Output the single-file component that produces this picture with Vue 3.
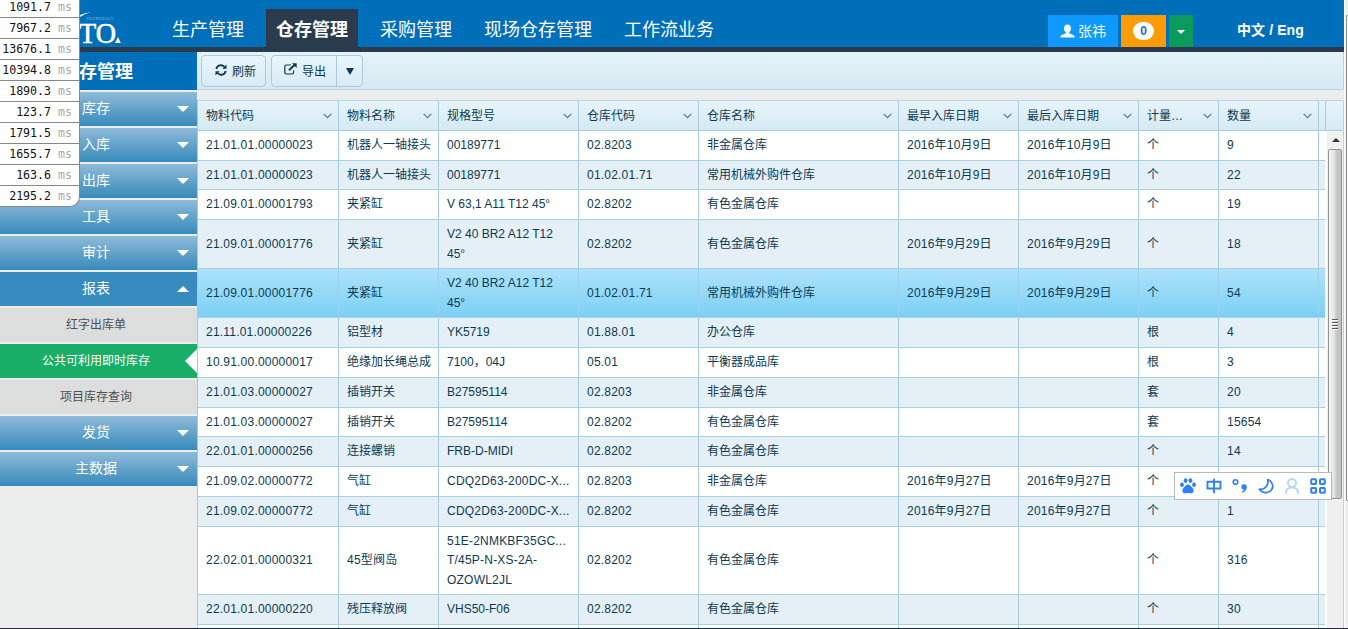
<script setup>
const timings = ['1091.7', '7967.2', '13676.1', '10394.8', '1890.3', '123.7', '1791.5', '1655.7', '163.6', '2195.2']
const tabs = ['生产管理', '仓存管理', '采购管理', '现场仓存管理', '工作流业务']
const menu = [
  { t: '库存' }, { t: '入库' }, { t: '出库' }, { t: '工具' }, { t: '审计' },
  { t: '报表', k: 'open' },
  { t: '红字出库单', k: 'sub' },
  { t: '公共可利用即时库存', k: 'sub current' },
  { t: '项目库存查询', k: 'sub' },
  { t: '发货' }, { t: '主数据' },
]
const columns = ['物料代码', '物料名称', '规格型号', '仓库代码', '仓库名称', '最早入库日期', '最后入库日期', '计量…', '数量']
const oct = '2016年10月9日'
const s29 = '2016年9月29日'
const s27 = '2016年9月27日'
const rows = [
  { h: 30, c: ['21.01.01.00000023', '机器人一轴接头', '00189771', '02.8203', '非金属仓库', oct, oct, '个', '9'] },
  { h: 29, c: ['21.01.01.00000023', '机器人一轴接头', '00189771', '01.02.01.71', '常用机械外购件仓库', oct, oct, '个', '22'] },
  { h: 30, c: ['21.09.01.00001793', '夹紧缸', 'V 63,1 A11 T12 45°', '02.8202', '有色金属仓库', '', '', '个', '19'] },
  { h: 49, c: ['21.09.01.00001776', '夹紧缸', 'V2 40 BR2 A12 T12\n45°', '02.8202', '有色金属仓库', s29, s29, '个', '18'] },
  { h: 49, sel: true, c: ['21.09.01.00001776', '夹紧缸', 'V2 40 BR2 A12 T12\n45°', '01.02.01.71', '常用机械外购件仓库', s29, s29, '个', '54'] },
  { h: 30, c: ['21.11.01.00000226', '铝型材', 'YK5719', '01.88.01', '办公仓库', '', '', '根', '4'] },
  { h: 30, c: ['10.91.00.00000017', '绝缘加长绳总成', '7100，04J', '05.01', '平衡器成品库', '', '', '根', '3'] },
  { h: 30, c: ['21.01.03.00000027', '插销开关', 'B27595114', '02.8203', '非金属仓库', '', '', '套', '20'] },
  { h: 29, c: ['21.01.03.00000027', '插销开关', 'B27595114', '02.8202', '有色金属仓库', '', '', '套', '15654'] },
  { h: 30, c: ['22.01.01.00000256', '连接螺销', 'FRB-D-MIDI', '02.8202', '有色金属仓库', '', '', '个', '14'] },
  { h: 30, c: ['21.09.02.00000772', '气缸', 'CDQ2D63-200DC-X...', '02.8203', '非金属仓库', s27, s27, '个', ''] },
  { h: 30, c: ['21.09.02.00000772', '气缸', 'CDQ2D63-200DC-X...', '02.8202', '有色金属仓库', s27, s27, '个', '1'] },
  { h: 68, c: ['22.02.01.00000321', '45型阀岛', '51E-2NMKBF35GC...\nT/45P-N-XS-2A-\nOZOWL2JL', '02.8202', '有色金属仓库', '', '', '个', '316'] },
  { h: 30, c: ['22.01.01.00000220', '残压释放阀', 'VHS50-F06', '02.8202', '有色金属仓库', '', '', '个', '30'] },
  { h: 30, c: ['', '', '', '', '', '', '', '', ''] },
]
const isCode = (s, i) => /[0-9]/.test(s) && (i !== 2 || s.includes('...'))
</script>

<template>
  <div class="page">
    <div class="window">
      <header class="top">
        <svg class="logo" width="50" height="36" viewBox="0 0 50 36">
          <path d="M8 4.500Q14 1.500 20 1.200Q14 2.500 9 6z" fill="#fff" />
          <text x="15" y="9" class="logo-small" textLength="28">TECHNOLOGY</text>
          <text x="8" y="32" class="logo-text" textLength="37" lengthAdjust="spacingAndGlyphs">TO</text>
          <path d="M47 26L49.800 32H44z" fill="#fff" />
        </svg>
        <nav class="tabs">
          <a v-for="(t, i) in tabs" :key="t" :class="['tab', { active: i === 1 }]">{{ t }}</a>
        </nav>
        <div class="user">
          <span class="name">
            <svg width="16" height="16" viewBox="0 0 16 16"><path fill="#fff" d="M8 1C5.700 1 4.300 2.600 4.300 5c0 2 .8 3.300 1.900 4.400v1L2 12.200C1 12.700 .5 13.200 .5 15h15c0-1.800-.5-2.300-1.500-2.800l-4.200-1.800v-1c1.100-1.100 1.900-2.400 1.900-4.400C11.700 2.600 10.300 1 8 1z" /></svg>
            张祎
          </span>
          <span class="msgs"><b>0</b></span>
          <span class="more"><i></i></span>
        </div>
        <span class="lang">中文 / Eng</span>
      </header>

      <div class="body">
        <aside class="side">
          <h1>存管理</h1>
          <div v-for="m in menu" :key="m.t" :class="['item', m.k]">
            {{ m.t }}
            <i class="arrow"></i>
          </div>
        </aside>

        <main class="main">
          <div class="toolbar">
            <button class="btn refresh">
              <svg width="12" height="12" viewBox="0 0 12 12" fill="none" stroke="#0c3a54" stroke-width="1.800"><path d="M1.300 5A4.600 4.600 0 0 1 9.400 3M10.700 7A4.600 4.600 0 0 1 2.600 9" /><path d="M11.500 .6v4.200H7.300zM.5 11.400V7.200h4.200z" fill="#0c3a54" stroke="none" /></svg>
              <span>刷新</span>
            </button>
            <div class="group">
              <button class="btn export">
                <svg width="13" height="12" viewBox="0 0 13 12" fill="none" stroke="#0c3a54"><path d="M7 2H2.500Q.8 2 .8 3.700v5.600Q.8 11 2.500 11h5.400q1.700 0 1.700-1.700V7.500" stroke-width="1.200" /><path d="M5 7.300L10.500 2" stroke-width="1.900" /><path d="M8 .2h4.700v4.700z" fill="#0c3a54" stroke="none" /></svg>
                <span>导出</span>
              </button>
              <button class="btn drop"><i></i></button>
            </div>
          </div>

          <section class="grid">
            <div class="row head">
              <div v-for="c in columns" :key="c" class="cell">
                <span>{{ c }}</span>
                <svg width="9" height="6" viewBox="0 0 9 6"><path d="M.7 .8L4.500 4.600L8.300 .8" fill="none" stroke="#547388" stroke-width="1.100" /></svg>
              </div>
              <div class="cell filler"></div>
              <div class="cell last"></div>
            </div>
            <div class="scroll">
              <div class="rows">
                <div v-for="(r, n) in rows" :key="n" :class="['row', { alt: n % 2, sel: r.sel }]" :style="{ height: r.h + 'px' }">
                  <div v-for="(v, i) in r.c" :key="i" :class="['cell', { code: isCode(v, i) }]">{{ v }}</div>
                </div>
              </div>
              <div class="bar">
                <i class="up"></i>
                <div class="thumb"><i></i><i></i><i></i><i></i></div>
              </div>
            </div>
          </section>
        </main>
      </div>
    </div>

    <div class="outer"><div></div></div>

    <div class="timings">
      <div v-for="t in timings" :key="t">{{ t }} <em>ms</em></div>
    </div>

    <div class="ime">
      <svg width="16" height="16" viewBox="0 0 16 16" fill="#2f80f6"><ellipse cx="2" cy="6.800" rx="1.900" ry="2.200" /><ellipse cx="5.600" cy="2.600" rx="1.900" ry="2.400" /><ellipse cx="10.400" cy="2.600" rx="1.900" ry="2.400" /><ellipse cx="14" cy="6.800" rx="1.900" ry="2.200" /><path d="M8 6.500c2 0 2.600 1.500 4.200 3 2 1.900 2 6-1.200 6-1.200 0-1.800-.4-3-.4s-1.800.4-3 .4c-3.200 0-3.200-4.100-1.200-6C5.400 8 6 6.500 8 6.500z" /></svg>
      <svg width="16" height="16" viewBox="0 0 16 16" fill="none" stroke="#2f80f6" stroke-width="1.900"><path d="M1.500 3.800h13v6.700h-13zM8 .8v14.400" /></svg>
      <svg width="16" height="16" viewBox="0 0 16 16"><circle cx="3.500" cy="4" r="2.300" fill="none" stroke="#2f80f6" stroke-width="1.600" /><path d="M12 6.200a2.700 2.700 0 0 1 2.800 2.800c0 2.700-1.800 4.900-4.500 5.800l-.5-1.200c1.400-.7 2-1.300 2.100-2.200A2.600 2.600 0 1 1 12 6.200z" fill="#2f80f6" /></svg>
      <svg width="16" height="16" viewBox="0 0 16 16" fill="none" stroke="#2f80f6" stroke-width="1.700" stroke-linejoin="round"><path d="M9.800 1.500c6 2.700 6.300 9 2 11.900C8.300 15.700 3.400 14.500 1.300 11.200c5 1 9.500-3.200 8.500-9.700z" /></svg>
      <svg width="16" height="16" viewBox="0 0 16 16" fill="none" stroke="#bfd5f7" stroke-width="2"><circle cx="8" cy="5" r="4" /><path d="M1.800 15.800c.2-4 2.800-6.300 6.200-6.300s6 2.300 6.200 6.300" /></svg>
      <svg width="16" height="16" viewBox="0 0 16 16" fill="none" stroke="#2f80f6" stroke-width="2"><rect x="1.200" y="1.200" width="4.800" height="4.800" rx=".7" /><rect x="10" y="1.200" width="4.800" height="4.800" rx=".7" /><rect x="1.200" y="10" width="4.800" height="4.800" rx=".7" /><rect x="10" y="10" width="4.800" height="4.800" rx=".7" /></svg>
    </div>
  </div>
</template>

<style>
body { margin: 0; overflow: hidden; }
</style>

<style scoped>
* { box-sizing: border-box; }
.page {
  position: relative;
  display: flex;
  width: 1348px;
  height: 629px;
  overflow: hidden;
  background: #eceeed;
  border-bottom: 1px solid #1b2a4b;
  font: 12px/20px "Liberation Sans", "Noto Sans CJK SC", sans-serif;
  color: #0c3a54;
}
.window { width: 1344px; height: 628px; overflow: hidden; flex: none; }
.top {
  display: flex;
  height: 52px;
  background: #006fba;
  border-bottom: 5px solid #2b3b4e;
}
.logo { margin: 11px 0 0 71px; flex: none; }
.logo-text { font: 29px "Liberation Serif", serif; fill: #fff; stroke: #fff; stroke-width: .6; }
.logo-small { font: 5px "Liberation Serif", serif; fill: #69aee0; }
.tabs { display: flex; gap: 12px; margin: 9px 0 0 41px; height: 43px; width: 562px; flex: none; }
.tab { height: 43px; padding: 0 10px; font-size: 18px; line-height: 43px; color: #fff; white-space: nowrap; }
.tab.active { background: #2b3b4e; font-weight: bold; }
.user { display: flex; gap: 3px; margin: 15px 0 0 324px; height: 32px; flex: none; }
.user span { display: flex; align-items: center; justify-content: center; color: #fff; }
.name { width: 70px; background: #0d99ff; font-size: 14px; gap: 3px; padding-bottom: 1px; }
.name svg { width: 15px; height: 16px; }
.msgs { width: 45px; background: #ff9b05; }
.msgs b { width: 21px; height: 18px; border-radius: 9px; background: #fff; color: #1d6fb5; font-size: 12px; line-height: 18px; text-align: center; }
.more { width: 24px; background: #0a9a5c; }
.more i { border: 4px solid transparent; border-top-color: #fff; border-bottom: 0; margin-top: 2px; }
.lang { margin: 20px 0 0 44px; font-size: 14px; font-weight: bold; color: #fff; white-space: nowrap; letter-spacing: .1px; }
.body { display: flex; height: 577px; }
.side { width: 197px; flex: none; background: #eceeed; }
.side h1 { margin: 0 0 2px; height: 38px; padding: 1px 0 0 79px; background: #006fba; color: #fff; font-size: 18px; line-height: 38px; }
.item {
  position: relative;
  height: 34px;
  margin-bottom: 2px;
  padding-right: 5px;
  font-size: 14px;
  line-height: 32px;
  text-align: center;
  color: #fff;
  background: linear-gradient(#8fbbd9, #378abb);
}
.item .arrow { position: absolute; right: 8px; top: 14px; border: 6px solid transparent; border-top-color: #fff; border-bottom: 0; }
.item.open { background: #378bbe; }
.item.open .arrow { border: 6px solid transparent; border-bottom-color: #fff; border-top: 0; }
.item.sub { background: #dcdddd; color: #505050; font-size: 12px; line-height: 34px; }
.item.sub .arrow { display: none; }
.item.sub.current { background: #18ae67; color: #fff; }
.item.sub.current .arrow { display: block; right: 0; top: 5px; border: 12px solid transparent; border-right-color: #fff; border-left: 0; }
.main { width: 1147px; }
.toolbar { display: flex; gap: 5px; height: 38px; padding: 3px 0 0 4px; border: 1px solid #b5d5e4; border-top: 0; border-left: 0; background: linear-gradient(#e5f3f9, #d6eaf3); }
.btn { display: flex; align-items: center; justify-content: center; height: 32px; padding: 0; border: 1px solid #a9cbdc; border-radius: 4px; background: linear-gradient(#e9f5fb, #d8ebf4); color: inherit; font: inherit; }
.btn span { margin-top: 1px; }
.refresh { width: 65px; gap: 5px; padding-left: 4px; }
.refresh svg { margin-top: -2px; }
.group { display: flex; }
.export { width: 66px; gap: 5px; border-radius: 4px 0 0 4px; padding-left: 2px; }
.export svg { margin-top: -4px; }
.drop { width: 27px; margin-left: -1px; border-radius: 0 4px 4px 0; }
.drop i { border: 4px solid transparent; border-top: 7px solid #0c3a54; border-bottom: 0; margin-top: 1px; }
.grid { margin-top: 10px; height: 540px; border-left: 1px solid #a9cbdc; border-right: 1px solid #b5d5e4; }
.row {
  display: grid;
  grid-template-columns: 141px 100px 140px 120px 200px 120px 120px 80px 100px;
  width: 1127px;
  border-bottom: 1px solid #a9d0e0;
}
.cell { display: flex; align-items: center; min-width: 0; padding: 1px 0 0 8px; border-right: 1px solid #a9cbdc; line-height: 19.500px; white-space: pre; overflow: hidden; }
.code { letter-spacing: .21px; }
.head { width: 1145px; height: 31px; grid-template-columns: 141px 100px 140px 120px 200px 120px 120px 80px 100px 7px 17px; border-top: 1px solid #b5d5e4; background: linear-gradient(#e7f4fa, #d5eaf3); }
.head .cell { justify-content: space-between; padding: 0 6px 0 8px; }
.head .cell span { margin-top: 2px; }
.head .filler { padding: 0; }
.head .last { border: 0; padding: 0; }
.scroll { display: flex; height: 498px; overflow: hidden; }
.rows { width: 1129px; flex: none; overflow: hidden; background: #fff; }
.rows .row { background: #fff; }
.rows .row.alt { background: #e4f0f6; }
.rows .row.sel { background: linear-gradient(#ade2fa, #7bd0f5); border-color: #9bd7f2; }
.rows .row.sel .cell { border-color: #9bd3ec; }
.bar { width: 16px; flex: none; padding: 7px 0 0 1px; background: #f0f0f0; }
.up { display: block; width: 0; margin-left: 4px; border: 4px solid transparent; border-bottom: 4px solid #333; border-top: 0; }
.thumb { display: flex; flex-direction: column; align-items: center; justify-content: center; gap: 2px; width: 14px; height: 350px; margin-top: 7px; border: 1px solid #929292; border-radius: 2px; background: linear-gradient(90deg, #f5f5f5, #e2e2e2 45%, #c8c9cb 60%, #bfc0c3); }
.thumb i { width: 6px; height: 1px; background: #555; box-shadow: 0 1px #fff; }
.outer { width: 4px; height: 629px; flex: none; background: #f0f0f0; border-left: 1px solid #fff; }
.outer div { margin: 15px 0 0 1px; height: 486px; border: 1px solid #8c8c8c; border-right: 0; border-radius: 2px 0 0 2px; background: #fafafa; }
.timings { position: absolute; left: 0; top: -3px; width: 80px; border: 1px solid #888; border-width: 0 1px 1px 0; border-radius: 0 0 10px 0; background: #fff; overflow: hidden; font: 11.600px/20px "DejaVu Sans Mono", monospace; color: #111; }
.timings div { height: 21px; padding-right: 7px; border-bottom: 1px solid #888; text-align: right; white-space: nowrap; }
.timings div:last-child { border: 0; height: 20px; }
.timings em { font-style: normal; color: #aaa; }
.ime { position: absolute; left: 1174px; top: 472px; display: flex; align-items: center; gap: 10px; width: 158px; height: 28px; padding: 0 0 0 5px; border: 1px solid #b5b9bd; background: #fff; }
</style>
